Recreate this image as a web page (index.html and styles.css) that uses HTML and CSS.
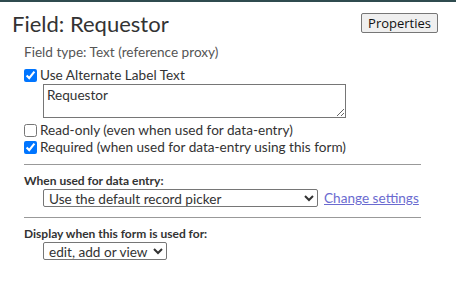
FILE: index.html
```html
<!DOCTYPE html>
<html lang="en">
<head>
  <meta charset="UTF-8">
  <title>Field: Requestor</title>
  <link rel="stylesheet" href="styles.css">
</head>
<body>
  <div class="page">
    <!-- Header -->
    <div class="header">
      <h1 class="title">Field: Requestor</h1>
      <button class="btn">Properties</button>
    </div>

    <div class="body">
      <div class="field-type">Field type: Text (reference proxy)</div>

      <label class="check">
        <input type="checkbox" checked>
        <span>Use Alternate Label Text</span>
      </label>
      <textarea class="alt-label">Requestor</textarea>

      <label class="check check-ro">
        <input type="checkbox">
        <span>Read-only (even when used for data-entry)</span>
      </label>
      <label class="check">
        <input type="checkbox" checked>
        <span>Required (when used for data-entry using this form)</span>
      </label>

      <hr class="sep">

      <div class="section-title">When used for data entry:</div>
      <div class="row">
        <select class="select select-wide">
          <option>Use the default record picker</option>
        </select>
        <a href="#" class="link">Change settings</a>
      </div>

      <hr class="sep">

      <div class="section-title">Display when this form is used for:</div>
      <div class="row">
        <select class="select">
          <option>edit, add or view</option>
        </select>
      </div>
    </div>
  </div>
</body>
</html>
```

FILE: styles.css
```css
/* General */
* {
  box-sizing: border-box;
}

body {
  margin: 0;
  font-family: 'Lato', 'Open Sans', sans-serif;
  font-size: 13.6px;
  color: #333;
  background: #fff;
}

.page {
  border-top: 2px solid #2f4b4f;
}

/* Header */
.header {
  display: flex;
  justify-content: space-between;
  align-items: flex-start;
  padding: 8px 18px 0 12px;
}

.title {
  margin: 0;
  font-size: 22px;
  font-weight: 400;
  line-height: 28px;
  color: #333;
}

.btn {
  margin-top: 3px;
  height: 20px;
  padding: 0 6px;
  font-family: 'Open Sans', sans-serif;
  font-size: 13px;
  color: #111;
  background: #efefef;
  border: 1px solid #767676;
  border-radius: 2px;
}

/* Body */
.body {
  padding: 5px 35px 0 24px;
}

.field-type {
  color: #555;
  line-height: 18px;
  margin-bottom: 6px;
}

.check {
  display: flex;
  align-items: center;
  line-height: 17px;
}

.check input {
  width: 13px;
  height: 13px;
  margin: 0 3px 0 0;
  accent-color: #0075ff;
}

.check-ro {
  margin-top: 4px;
}

.alt-label {
  display: block;
  width: 303px;
  height: 34px;
  margin: 0 0 0 19px;
  padding: 2px 3px;
  font-family: 'Lato', sans-serif;
  font-size: 13.6px;
  color: #333;
  border: 1px solid #767676;
  border-radius: 0;
  resize: both;
}

.sep {
  border: 0;
  border-top: 1px solid #999;
  margin: 8px 0 8px;
}

.row + .sep {
  margin-top: 10px;
}

.section-title {
  font-weight: 700;
  font-size: 12px;
  line-height: 15px;
}

.row {
  display: flex;
  align-items: center;
  gap: 6px;
  padding-left: 19px;
  margin-top: 1px;
  height: 18px;
}

.select {
  height: 18px;
  padding: 0 1px;
  line-height: 16px;
  font-family: 'Lato', sans-serif;
  font-size: 13.6px;
  color: #333;
  background: #fff;
  border: 1px solid #767676;
  border-radius: 2px;
}

.select-wide {
  width: 275px;
}

.link {
  color: #6b6bd0;
  font-size: 13.6px;
}
```
